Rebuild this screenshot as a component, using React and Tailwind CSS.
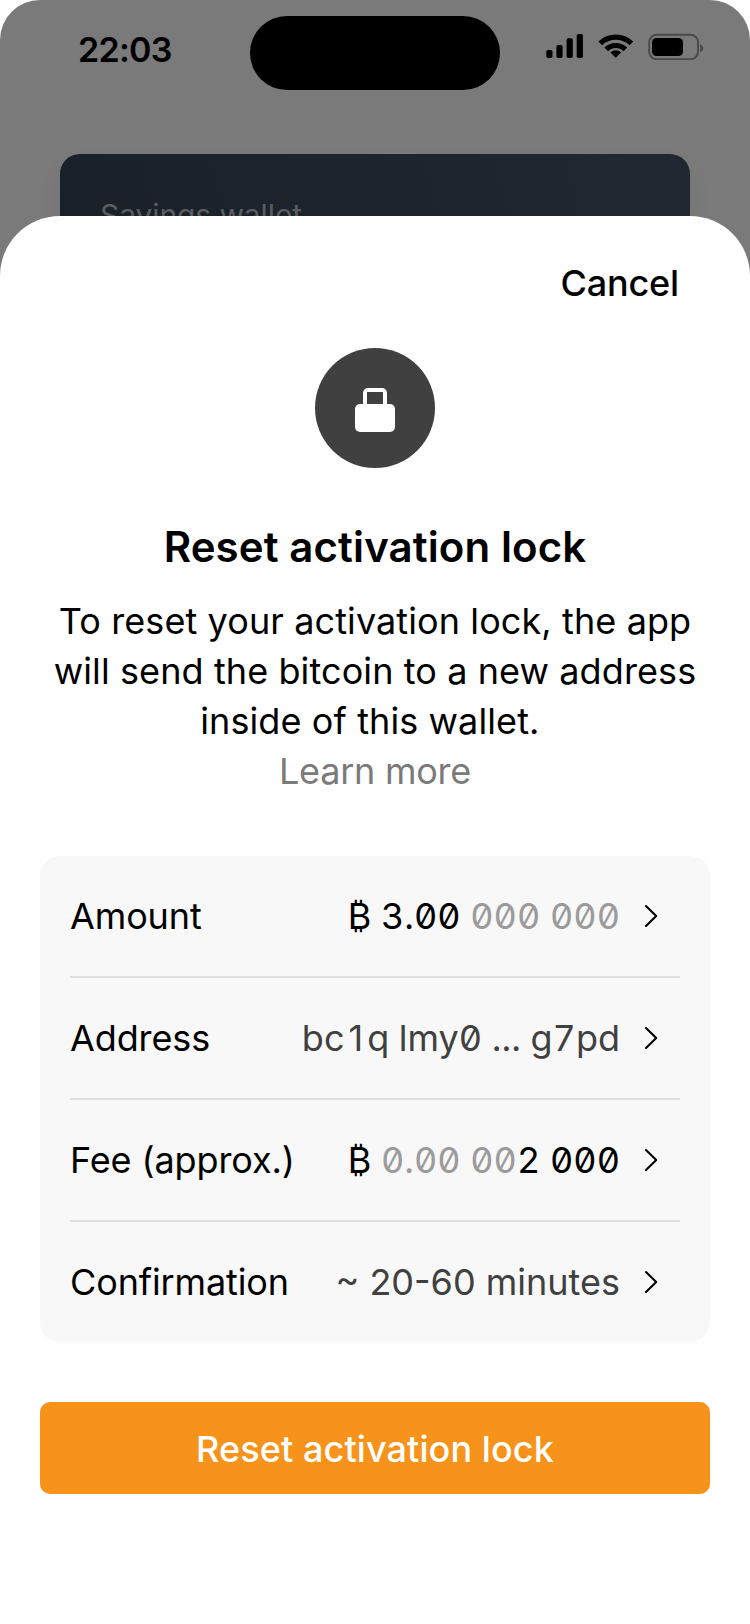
function StatusIcons() {
  return (
    <svg className="h-[28px] w-[160px]" viewBox="545 32 160 28" fill="#000">
      <rect x="546.3" y="50" width="6.2" height="8" rx="1.8" />
      <rect x="556.4" y="45" width="6.2" height="13" rx="1.8" />
      <rect x="566.6" y="38.3" width="6.2" height="19.7" rx="1.8" />
      <rect x="576.7" y="34" width="6.2" height="24" rx="1.8" />
      <g fill="none" stroke="#000" strokeWidth="5.2">
        <path d="M600.2 43.3A22.6 22.6 0 0 1 631.4 43.3" />
        <path d="M606.2 49.4A13.8 13.8 0 0 1 625.4 49.4" />
      </g>
      <path d="M615.8 57.8L610.4 52.4A7.6 7.6 0 0 1 621.2 52.4Z" />
      <rect x="649.2" y="34.8" width="48.8" height="24.4" rx="7.4" fill="none" stroke="#000" strokeOpacity=".4" strokeWidth="1.9" />
      <rect x="652" y="38" width="31" height="18" rx="4.4" />
      <path d="M700.2 44.2c4 1.5 4 6.4 0 8z" fillOpacity=".42" />
    </svg>
  );
}

function Chevron() {
  return (
    <svg className="h-[24px] w-[16px]" viewBox="0 0 16 24" fill="none" stroke="#000" strokeWidth="2.1" strokeLinecap="round" strokeLinejoin="round">
      <path d="M3 2L13.2 12L3 22" />
    </svg>
  );
}

function Row({ label, children, last }) {
  return (
    <div className={last ? "flex h-[120px] items-center" : "flex h-[122px] items-center border-b-2 border-[#dedede]"}>
      <span className="grow tracking-[-0.12px]">{label}</span>
      <span className="mr-[23px] whitespace-pre text-[#404040]">{children}</span>
      <span className="mr-[21px] flex">
        <Chevron />
      </span>
    </div>
  );
}

export default function App() {
  return (
    <div className="h-[1624px] w-[750px] overflow-hidden bg-white font-['Inter',sans-serif] text-black">
      <div className="flex h-[1624px] flex-col rounded-[40px] bg-[linear-gradient(#7a7a7a_0,#7a7a7a_400px,#fff_400px)]">
        <header className="flex h-[154px] shrink-0 items-start">
          <div className="w-[250px] pt-[29px] pl-[78px] text-[34px] leading-[42px] font-semibold tracking-[-0.7px]">22:03</div>
          <div className="mt-[16px] h-[74px] w-[250px] rounded-full bg-black" />
          <div className="mt-[32px] ml-[45px]">
            <StatusIcons />
          </div>
        </header>
        <div className="mx-[60px] h-[62px] shrink-0 overflow-hidden rounded-t-[20px] bg-[linear-gradient(75deg,#18202a,#222831)] pt-[43px] pl-[40px] text-[30px] leading-[36px] tracking-[-0.1px] whitespace-nowrap text-[#5b5c5e] shadow-[0_12px_24px_rgba(0,0,0,0.06)]">
          Savings wallet
        </div>
        <main className="relative flex grow flex-col rounded-t-[60px] bg-white px-[40px]">
          <button className="mt-[42px] mr-[31px] self-end text-[36px] leading-[50px] font-medium tracking-[-0.15px]">Cancel</button>
          <div className="mt-[40px] flex size-[120px] justify-center self-center rounded-full bg-[#404040] pt-[40px]">
            <svg className="h-[44px] w-[40px]" viewBox="0 0 40 44" fill="#fff">
              <path d="M8 17V5a5 5 0 0 1 5-5h14a5 5 0 0 1 5 5v12h-4V4H12v13z" />
              <rect y="16" width="40" height="28" rx="5" />
            </svg>
          </div>
          <h1 className="mt-[54px] text-center text-[42px] leading-[50px] font-semibold tracking-[0.1px]">Reset activation lock</h1>
          <p className="mt-[24px] text-center text-[36px] leading-[50px] tracking-[0.1px] whitespace-nowrap">
            To reset your activation lock, the app
            <br />
            will send the bitcoin to a new address
            <br />
            inside of this wallet.{"\u00a0"}
            <br />
            <span className="tracking-[-0.25px] text-[#7a7a7a]">Learn more</span>
          </p>
          <section className="mt-[60px] rounded-[20px] bg-[#f8f8f8] px-[30px] text-[36px] leading-[50px]">
            <Row label="Amount">
              <span className="text-black slashed-zero tabular-nums">₿ 3.00 <span className="text-[#9b9b9b]">000 000</span></span>
            </Row>
            <Row label="Address">
              <span className="slashed-zero tabular-nums">bc<span className="px-[4px] proportional-nums">1</span>q lmy0 ... g7pd</span>
            </Row>
            <Row label="Fee (approx.)">
              <span className="text-black slashed-zero tabular-nums">₿ <span className="text-[#9b9b9b]">0.00 00</span>2 000</span>
            </Row>
            <Row label="Confirmation" last>~ 20-60 minutes</Row>
          </section>
          <button className="mt-[60px] h-[92px] rounded-[10px] bg-[#f7931a] pt-[2px] text-[36px] leading-[50px] font-medium tracking-[0.1px] text-white">Reset activation lock</button>
        </main>
      </div>
    </div>
  );
}
